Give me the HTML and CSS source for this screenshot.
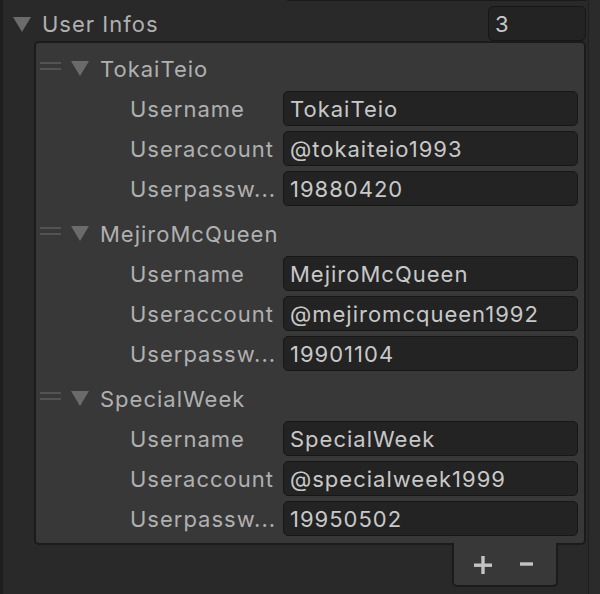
FILE: index.html
```html
<!DOCTYPE html>
<html lang="en">
<head>
<meta charset="UTF-8">
<meta name="viewport" content="width=device-width, initial-scale=1.0">
<title>User Infos - Inspector</title>
<link rel="stylesheet" href="styles.css">
</head>
<body>

<div class="inspector">
    <div class="edge"></div>

    <div class="main">
        <!-- bottom of the field above -->
        <div class="prev-line"></div>

        <!-- List header -->
        <div class="list-header">
            <span class="foldout"></span>
            <span class="list-title">User Infos</span>
            <div class="count-field">3</div>
        </div>

        <!-- List body -->
        <div class="list-box">
            <div class="item">
                <div class="item-header">
                    <span class="handle"></span>
                    <span class="foldout"></span>
                    <span class="item-title">TokaiTeio</span>
                </div>
                <div class="prop-row"><span class="prop-label">Username</span><div class="text-field">TokaiTeio</div></div>
                <div class="prop-row"><span class="prop-label">Useraccount</span><div class="text-field">@tokaiteio1993</div></div>
                <div class="prop-row"><span class="prop-label">Userpassw...</span><div class="text-field">19880420</div></div>
            </div>

            <div class="item">
                <div class="item-header">
                    <span class="handle"></span>
                    <span class="foldout"></span>
                    <span class="item-title">MejiroMcQueen</span>
                </div>
                <div class="prop-row"><span class="prop-label">Username</span><div class="text-field">MejiroMcQueen</div></div>
                <div class="prop-row"><span class="prop-label">Useraccount</span><div class="text-field">@mejiromcqueen1992</div></div>
                <div class="prop-row"><span class="prop-label">Userpassw...</span><div class="text-field">19901104</div></div>
            </div>

            <div class="item">
                <div class="item-header">
                    <span class="handle"></span>
                    <span class="foldout"></span>
                    <span class="item-title">SpecialWeek</span>
                </div>
                <div class="prop-row"><span class="prop-label">Username</span><div class="text-field">SpecialWeek</div></div>
                <div class="prop-row"><span class="prop-label">Useraccount</span><div class="text-field">@specialweek1999</div></div>
                <div class="prop-row"><span class="prop-label">Userpassw...</span><div class="text-field">19950502</div></div>
            </div>
        </div>

        <!-- Add / remove buttons -->
        <div class="list-footer">
            <svg class="btn-plus" width="18" height="18" viewBox="0 0 18 18">
                <rect x="0" y="7.5" width="18" height="3.4" fill="#c4c4c4"/>
                <rect x="7.3" y="0" width="3.4" height="18" fill="#c4c4c4"/>
            </svg>
            <svg class="btn-minus" width="13" height="4" viewBox="0 0 13 4">
                <rect x="0" y="0.3" width="13" height="3.4" fill="#c4c4c4"/>
            </svg>
        </div>
    </div>

    <div class="scroll-gutter"></div>
</div>

</body>
</html>
```

FILE: styles.css
```css
/* Unity style dark inspector */
body {
    margin: 0;
    background-color: #292929;
    font-family: Inter, "Noto Sans", sans-serif;
    font-size: 22px;
    letter-spacing: 1px;
    color: #b0b0b0;
}

.inspector {
    display: flex;
    height: 594px;
    overflow: hidden;
}

.edge {
    width: 3px;
    background-color: #1e1e1e;
}

.main {
    flex: 1;
    display: flex;
    flex-direction: column;
}

.scroll-gutter {
    width: 11px;
    border-left: 1px solid #1f1f1f;
    background-color: #2b2b2b;
}

.prev-line {
    height: 1px;
    margin-left: 284px;
    margin-right: 2px;
    background-color: #1a1a1a;
}

/* header row with the size field */
.list-header {
    display: flex;
    align-items: center;
    height: 36px;
    padding-top: 4px;
    margin-right: 2px;
}

.list-header .foldout {
    margin-left: 10px;
    margin-top: 3px;
}

.list-title {
    margin-left: 11px;
    margin-top: 2px;
    flex: 1;
}

.count-field {
    width: 90px;
    height: 31px;
    line-height: 31px;
    padding: 2px 0 0 6px;
    background-color: #232323;
    border: 1px solid #171717;
    border-radius: 5px;
    color: #c8c8c8;
}

.foldout {
    width: 0;
    height: 0;
    border-left: 9px solid transparent;
    border-right: 9px solid transparent;
    border-top: 15px solid #6b6b6b;
}

/* list body */
.list-box {
    margin-left: 31px;
    margin-right: 2px;
    padding: 3px 0 2px;
    background-color: #383838;
    border: 2px solid #1b1b1b;
    border-radius: 5px;
}

.item-header {
    display: flex;
    align-items: center;
    height: 45px;
}

.handle {
    width: 21px;
    height: 4px;
    margin-left: 4px;
    margin-bottom: 5px;
    border-top: 2px solid #535353;
    border-bottom: 2px solid #535353;
}

.item-header .foldout {
    margin-left: 10px;
}

.item-title {
    margin-left: 11px;
    margin-top: 1px;
}

.prop-row {
    display: flex;
    height: 40px;
    padding-left: 94px;
}

.prop-label {
    width: 150px;
    height: 33px;
    line-height: 33px;
    padding-top: 2px;
    white-space: nowrap;
    overflow: hidden;
}

.text-field {
    width: 287px;
    height: 31px;
    line-height: 31px;
    margin-left: 3px;
    padding: 2px 0 0 6px;
    background-color: #232323;
    border: 1px solid #171717;
    border-radius: 5px;
    color: #c8c8c8;
    white-space: nowrap;
}

/* + / - buttons under the list */
.list-footer {
    align-self: flex-end;
    display: flex;
    align-items: center;
    width: 102px;
    height: 42px;
    margin-right: 30px;
    margin-top: -2px;
    background-color: #383838;
    border: 2px solid #1b1b1b;
    border-top: none;
    border-radius: 0 0 5px 5px;
}

.btn-plus {
    margin-left: 20px;
    margin-top: 2px;
}

.btn-minus {
    margin-left: 28px;
}
```
